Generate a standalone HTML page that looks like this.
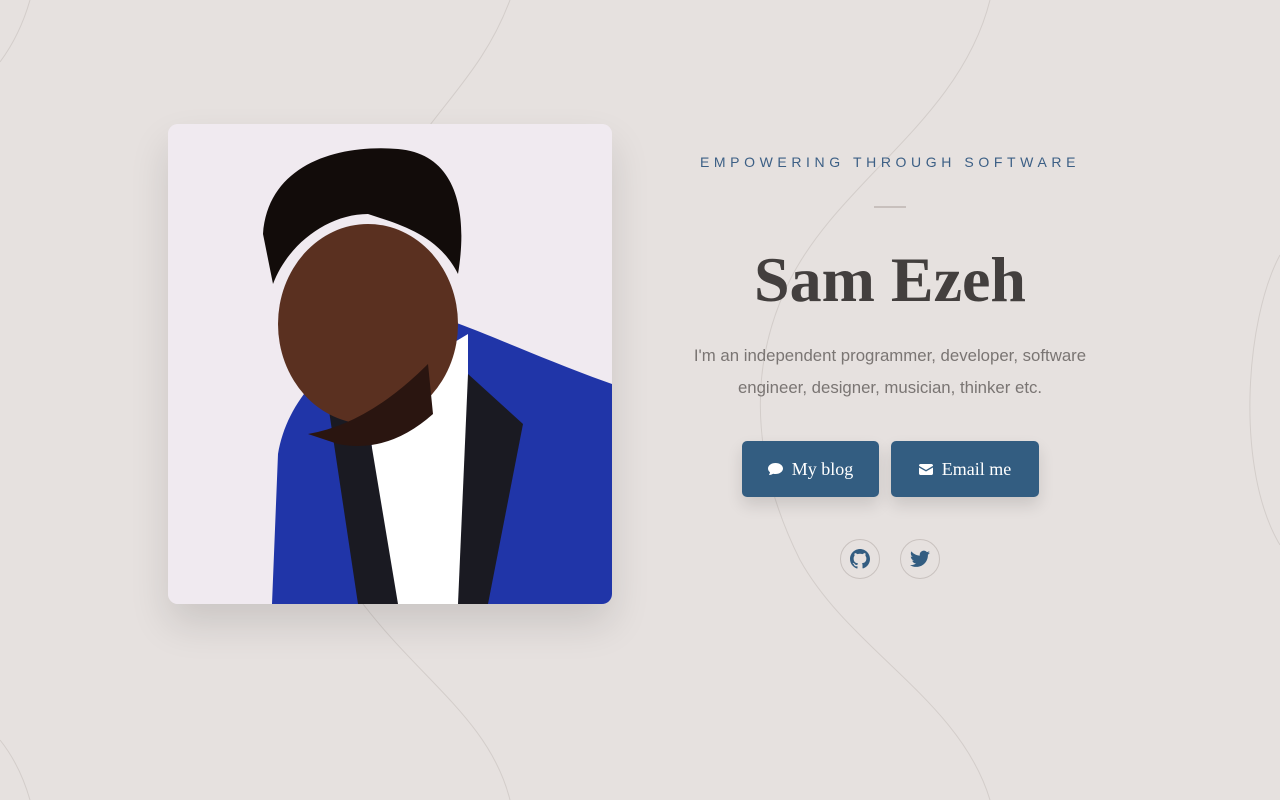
<!DOCTYPE html>
<html><head><meta charset="utf-8"><style>
body{margin:0;width:1280px;height:800px;background:#e6e1df;overflow:hidden;position:relative;font-family:"Liberation Sans",sans-serif}
.bg{position:absolute;left:0;top:0}
.photo{position:absolute;left:168px;top:124px;width:444px;height:480px;border-radius:10px;overflow:hidden;box-shadow:0 20px 40px rgba(0,0,0,.12);background:#efe9ee}
.right{position:absolute;left:640px;width:500px;top:0;text-align:center}
.tag{position:absolute;top:154px;width:500px;font-size:14px;letter-spacing:4.6px;color:#3c5f85}
.rule{position:absolute;top:206px;left:234px;width:32px;height:2px;background:#c8c0bd}
h1{position:absolute;top:243px;width:500px;margin:0;font-family:"Liberation Serif",serif;font-size:64px;font-weight:bold;color:#433f3e}
.desc{position:absolute;top:340px;width:500px;font-size:16.8px;line-height:32px;color:#7a7573}
.btn{position:absolute;top:441px;height:56px;background:#335d81;color:#fff;border-radius:5px;font-family:"Liberation Serif",serif;font-size:18px;line-height:56px;box-shadow:0 8px 16px rgba(0,0,0,.12);display:flex;align-items:center;justify-content:center;gap:9px}
.circ{position:absolute;top:539px;width:38px;height:38px;border:1px solid #c9c2bf;border-radius:50%;display:flex;align-items:center;justify-content:center}
</style></head><body>
<svg class="bg" width="1280" height="800" fill="none" stroke="#d3cdca" stroke-width="1">
<path d="M30 0 Q20 35 0 62"/>
<path d="M510 0 C480 80 430 110 380 200 M360 600 C420 680 490 720 510 800"/>
<path d="M990 0 C960 120 840 180 790 280 C740 380 760 480 800 560 C850 650 960 700 990 800"/>
<path d="M0 740 Q20 765 30 800"/>
<path d="M1280 255 C1245 320 1235 470 1280 545"/>
</svg>
<div class="photo">
<svg width="444" height="480">
<rect width="444" height="480" fill="#f0eaf0"/>
<path d="M104 480 L110 330 C120 270 170 220 260 190 C300 200 360 230 444 260 L444 480Z" fill="#2035a8"/>
<path d="M200 270 L300 210 L300 480 L215 480Z" fill="#fff"/>
<path d="M160 280 L200 300 L230 480 L190 480Z" fill="#1a1a22"/>
<path d="M300 250 L355 300 L320 480 L290 480Z" fill="#1a1a22"/>
<ellipse cx="200" cy="200" rx="90" ry="100" fill="#5a3020"/>
<path d="M95 110 C100 40 170 20 230 25 C290 30 300 90 290 150 C270 110 230 100 200 90 C160 90 120 120 105 160Z" fill="#120c0a"/>
<path d="M140 310 Q200 300 260 240 L265 290 Q220 330 170 320Z" fill="#2a1510"/>
</svg>
</div>
<div class="right">
<div class="tag">EMPOWERING THROUGH SOFTWARE</div>
<div class="rule"></div>
<h1>Sam Ezeh</h1>
<div class="desc">I'm an independent programmer, developer, software<br>engineer, designer, musician, thinker etc.</div>
<div class="btn" style="left:102px;width:137px"><svg width="15" height="13" viewBox="0 0 15 13"><path fill="#fff" d="M7.5 0C3.4 0 0 2.4 0 5.5c0 1.5.8 2.8 2 3.8C1.8 10.6 1 11.7 1 12c1.8 0 3.3-.8 4.2-1.3.7.2 1.5.3 2.3.3 4.1 0 7.5-2.4 7.5-5.5S11.6 0 7.5 0z"/></svg>My blog</div>
<div class="btn" style="left:251px;width:148px"><svg width="14" height="11" viewBox="0 0 14 11"><path fill="#fff" d="M0 1.5C0 .7.7 0 1.5 0h11c.8 0 1.5.7 1.5 1.5v.4L7 6 0 1.9zM0 3.5l7 4 7-4v6c0 .8-.7 1.5-1.5 1.5h-11C.7 11 0 10.3 0 9.5z"/></svg>Email me</div>
<div class="circ" style="left:200px"><svg width="20" height="20" viewBox="0 0 16 16"><path fill="#335d81" d="M8 0C3.6 0 0 3.6 0 8c0 3.5 2.3 6.5 5.5 7.6.4.1.5-.2.5-.4v-1.4c-2.2.5-2.7-1-2.7-1-.4-.9-.9-1.2-.9-1.2-.7-.5.1-.5.1-.5.8.1 1.2.8 1.2.8.7 1.2 1.900.9 2.300.7.1-.5.3-.9.5-1.1-1.8-.2-3.6-.9-3.6-4 0-.9.3-1.6.8-2.1-.1-.2-.4-1 .1-2.1 0 0 .7-.2 2.2.8.6-.2 1.3-.3 2-.3s1.4.1 2 .3c1.5-1 2.2-.8 2.2-.8.4 1.1.2 1.9.1 2.1.5.6.8 1.3.8 2.1 0 3.1-1.9 3.7-3.600 3.900.3.3.5.8.5 1.5v2.2c0 .2.1.5.6.4C13.7 14.5 16 11.5 16 8c0-4.4-3.6-8-8-8z"/></svg></div>
<div class="circ" style="left:260px"><svg width="20" height="18" viewBox="0 0 24 20"><path fill="#335d81" d="M24 2.4c-.9.4-1.8.7-2.8.8 1-.6 1.8-1.6 2.2-2.7-1 .6-2 1-3.1 1.2C19.3.7 18 0 16.6 0c-2.7 0-4.9 2.2-4.9 4.9 0 .4 0 .8.1 1.1C7.7 5.800 4.100 3.900 1.700.9c-.4.7-.7 1.600-.7 2.500 0 1.700.9 3.200 2.200 4.100-.8 0-1.600-.2-2.200-.6v.1c0 2.400 1.700 4.400 3.900 4.800-.4.1-.8.2-1.300.2-.3 0-.6 0-.9-.1.6 2 2.400 3.400 4.600 3.400-1.700 1.300-3.800 2.100-6.100 2.100-.4 0-.8 0-1.200-.1 2.200 1.400 4.800 2.200 7.500 2.200 9.100 0 14-7.500 14-14v-.6c1-.7 1.800-1.600 2.500-2.500z"/></svg></div>
</div>
</body></html>
